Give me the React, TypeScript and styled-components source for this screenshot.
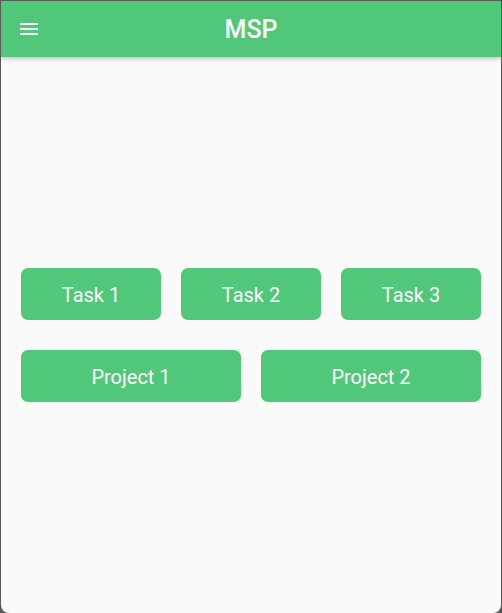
import React from "react";
import styled, { createGlobalStyle } from "styled-components";

const Global = createGlobalStyle`
  html, body { margin: 0; padding: 0; background: #3a3a3a; }
  body { font-family: Roboto, "Noto Sans", sans-serif; }
  * { box-sizing: border-box; }
`;

const Frame = styled.div`
  width: 502px;
  height: 613px;
  background: #5a5a5a;
  padding: 1px 1px 0 1px;
  display: flex;
`;

const Screen = styled.div`
  flex: 1;
  display: flex;
  flex-direction: column;
  background: #fafafa;
  border-radius: 0 0 8px 8px;
  overflow: hidden;
`;

const AppBar = styled.header`
  height: 56px;
  flex: none;
  background: #51c879;
  display: flex;
  align-items: center;
  position: relative;
  z-index: 1;
  box-shadow: 0 2px 4px rgba(0, 0, 0, 0.22);
  padding-left: 16px;
`;

const MenuButton = styled.button`
  width: 24px;
  height: 24px;
  padding: 0;
  border: none;
  background: transparent;
  color: #fff;
  display: flex;
  margin-top: -1px;
`;

const Title = styled.h1`
  position: absolute;
  left: 0;
  right: 0;
  margin: 0;
  text-align: center;
  color: #fff;
  font-size: 25px;
  font-weight: 500;
  pointer-events: none;
`;

const Body = styled.main`
  flex: 1;
  display: flex;
  flex-direction: column;
  justify-content: center;
  gap: 30px;
  padding: 0 20px;
`;

const Row = styled.div<{ $cols: number }>`
  display: grid;
  grid-template-columns: repeat(${(p) => p.$cols}, 1fr);
  gap: 20px;
`;

const ActionButton = styled.button`
  height: 52px;
  border: none;
  border-radius: 7px;
  background: #51c879;
  color: #fff;
  font-family: Roboto, "Noto Sans", sans-serif;
  font-size: 20px;
  font-weight: 400;
  padding: 2px 0 0;
`;

export default function App() {
  return (
    <>
      <Global />
      <Frame>
        <Screen>
          <AppBar>
            <MenuButton aria-label="menu">
              <svg width="24" height="24" viewBox="0 0 24 24" fill="currentColor">
                <path d="M3 18h18v-2H3v2zm0-5h18v-2H3v2zm0-7v2h18V6H3z" />
              </svg>
            </MenuButton>
            <Title>MSP</Title>
          </AppBar>
          <Body>
            <Row $cols={3}>
              <ActionButton>Task 1</ActionButton>
              <ActionButton>Task 2</ActionButton>
              <ActionButton>Task 3</ActionButton>
            </Row>
            <Row $cols={2}>
              <ActionButton>Project 1</ActionButton>
              <ActionButton>Project 2</ActionButton>
            </Row>
          </Body>
        </Screen>
      </Frame>
    </>
  );
}
